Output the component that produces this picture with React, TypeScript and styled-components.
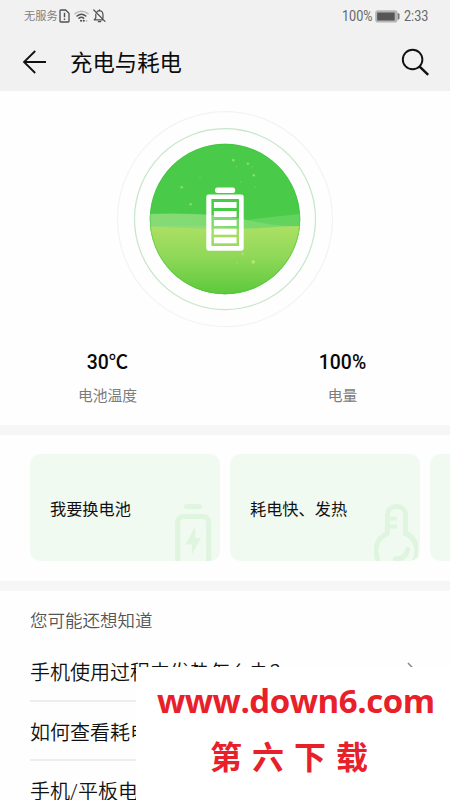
import React from "react";
import styled, { createGlobalStyle } from "styled-components";

const GlobalStyle = createGlobalStyle`
  * { box-sizing: border-box; }
  body {
    margin: 0;
    background: #fff;
    font-family: Roboto, "Noto Sans CJK SC", sans-serif;
    color: #111;
  }
  svg { display: block; flex: none; }
`;

const Screen = styled.main`
  position: relative;
  width: 450px;
  height: 800px;
  overflow: hidden;
  background: #fefefe;
`;

const Header = styled.header`
  height: 91px;
  background: #f1f1f1;
`;

const StatusBar = styled.div`
  display: flex;
  align-items: center;
  height: 32px;
  padding: 0 20px 0 24px;
  color: #666;
`;

const Carrier = styled.span`
  width: 35px;
  padding-top: 2px;
  font-size: 11.2px;
  line-height: 16px;
  color: #808080;
`;

const StatusText = styled.span<{ $width: number }>`
  width: ${(p) => p.$width}px;
  font-size: 14px;
  line-height: 16px;
  white-space: nowrap;
  transform: scaleX(0.9);
  transform-origin: left;
`;

const StatusIcons = styled.div`
  display: flex;
  align-items: center;
  gap: 4px;
  flex: 1;
`;

const StatusBattery = styled.div`
  margin-right: 4px;
`;

const TitleBar = styled.div`
  display: flex;
  align-items: center;
  height: 59px;
  padding: 0 20px 0 22px;
`;

const Title = styled.h1`
  flex: 1;
  margin: 2px 0 0 23px;
  font-size: 22.4px;
  line-height: 32px;
  font-weight: 400;
  color: #0c0c0c;
`;

const Hero = styled.section`
  display: flex;
  justify-content: center;
  height: 258px;
  padding-top: 17px;
`;

const Stats = styled.section`
  display: grid;
  grid-template-columns: 235px 235px;
  justify-content: center;
  height: 76px;
`;

const Stat = styled.div`
  text-align: center;
`;

const StatValue = styled.div`
  padding-top: 1px;
  font-size: 19.4px;
  line-height: 26px;
  font-weight: 500;
  color: #080808;
`;

const StatLabel = styled.div`
  margin-top: 9px;
  font-size: 14.8px;
  line-height: 22px;
  color: #7c7c7c;
`;

const Divider = styled.div`
  height: 10px;
  background: #f6f6f6;
`;

const Cards = styled.section`
  display: flex;
  gap: 10px;
  height: 146px;
  padding: 19px 0 20px 30px;
  overflow: hidden;
`;

const Card = styled.article`
  display: flex;
  flex: 0 0 190px;
  align-items: flex-end;
  justify-content: space-between;
  height: 107px;
  padding: 0 2px 0 20px;
  border-radius: 10px;
  background: #f1faf1;
  overflow: hidden;
`;

const CardText = styled.div`
  align-self: center;
  padding-top: 4px;
  font-size: 16.2px;
  line-height: 24px;
  white-space: nowrap;
`;

const Faq = styled.section`
  padding: 0 30px;
`;

const FaqHeading = styled.h2`
  margin: 0;
  padding-top: 17px;
  height: 51px;
  font-size: 17.5px;
  line-height: 26px;
  font-weight: 350;
  color: #555;
`;

const FaqRow = styled.div`
  display: flex;
  align-items: center;
  justify-content: space-between;
  height: 59.7px;
  padding-top: 4.4px;
  border-bottom: 2px solid #ededed;
  font-size: 20px;
  line-height: 30px;
  font-weight: 350;
  white-space: nowrap;
`;

const SiteBadge = styled.aside`
  position: absolute;
  left: 136px;
  top: 667px;
  width: 314px;
  height: 133px;
  padding-top: 10px;
  background: #fff;
  color: #e8202a;
  font-weight: 700;
  white-space: nowrap;
`;

const SiteUrl = styled.div`
  padding-left: 21px;
  font-family: "Open Sans", sans-serif;
  font-size: 33px;
  line-height: 48px;
  letter-spacing: -0.45px;
`;

const SiteName = styled.div`
  padding-left: 74px;
  font-family: "Noto Sans CJK SC", sans-serif;
  font-size: 32px;
  line-height: 44px;
  letter-spacing: 10px;
  margin-top: 8px;
`;

const SimIcon = () => (
  <svg width="11" height="14" viewBox="0 0 11 14" fill="none" stroke="#4f4f4f">
    <path d="M1 1.8Q1 1 1.8 1H6.6L10 4.3V12.2Q10 13 9.2 13H1.8Q1 13 1 12.2Z" strokeWidth="1.3" />
    <path d="M5.5 3.8V8.3M5.5 9.6V11" strokeWidth="1.4" />
  </svg>
);

const WifiIcon = () => (
  <svg width="15" height="14" viewBox="0 0 15 14" fill="none" strokeLinecap="round">
    <path d="M1 4.7Q7.5-.4 14 4.7" stroke="#bbb" strokeWidth="1.5" />
    <path d="M3 7Q7.4 3.4 11.8 7M5 9.2Q7.4 7.4 9.6 9.2" stroke="#505050" strokeWidth="1.5" />
    <path d="M7 11.8h.1M9.7 11.8h.1" stroke="#505050" strokeWidth="2" />
    <path d="M12.5 11.8h.1" stroke="#bbb" strokeWidth="1.8" />
  </svg>
);

const MutedBellIcon = () => (
  <svg width="13" height="14" viewBox="0 0 13 14" fill="none" stroke="#505050" strokeWidth="1.2" strokeLinecap="round" strokeLinejoin="round">
    <path d="M4.2 2.7Q5 1.7 6.5 1.7Q10 2 10 6V9M2.8 5V8.8L1.2 10.8H9.8M6.5.8V1.6M5.3 12.7H7.7M.8 1L12 12.3" />
  </svg>
);

const BatteryIcon = () => (
  <svg width="25" height="13" viewBox="0 0 25 13">
    <rect x=".2" y=".2" width="22.4" height="12.4" rx="2.8" fill="#b5b5b5" />
    <rect x="2.2" y="2.5" width="17.5" height="8" rx=".6" fill="#565656" />
    <path d="M22.7 3.2H23.4Q24.5 3.2 24.5 4.3V8.4Q24.5 9.5 23.4 9.5H22.7Z" fill="#777" />
  </svg>
);

const BackIcon = () => (
  <svg width="25" height="24" viewBox="0 0 25 24" fill="none" stroke="#111" strokeWidth="1.8">
    <path d="M13.2 1L2 12L13.2 23M2 12H24" />
  </svg>
);

const SearchIcon = () => (
  <svg width="30" height="30" viewBox="0 0 30 30" fill="none" stroke="#111">
    <circle cx="12.6" cy="12.5" r="9.8" strokeWidth="1.9" />
    <path d="M19.4 19.4L28.2 27.9" strokeWidth="2.5" />
  </svg>
);

const sparkles = [
  [123.3, 52.2, 1.4, 0.5], [137.9, 55.7, 1.3, 0.5], [126.4, 58.4, 0.8, 0.3],
  [142, 58.7, 0.8, 0.3], [143.8, 67.3, 1.3, 0.5], [130.3, 74, 0.8, 0.3],
  [90, 69.3, 0.8, 0.3], [71.7, 79.2, 1.3, 0.5], [80.6, 96.3, 1.3, 0.5],
  [145.1, 79.3, 0.8, 0.3], [132.6, 145.8, 1.2, 0.5], [143.2, 153.9, 1.8, 0.6],
  [127, 154.8, 0.9, 0.3],
];

const BatteryDial = () => (
  <svg width="220" height="222" viewBox="5 0 220 222">
    <defs>
      <clipPath id="dial"><circle cx="115" cy="111" r="75.2" /></clipPath>
      <linearGradient id="meadow" x1="0" y1="0" x2="0" y2="1">
        <stop offset="0" stopColor="#ace064" />
        <stop offset=".45" stopColor="#8ed858" />
        <stop offset="1" stopColor="#5ac83a" />
      </linearGradient>
      <linearGradient id="mist" x1="0" y1="0" x2="1" y2="0">
        <stop offset="0" stopColor="#86db77" />
        <stop offset="1" stopColor="#75d968" />
      </linearGradient>
    </defs>
    <circle cx="115" cy="111.1" r="107.5" fill="none" stroke="#f4f3f1" strokeWidth="1.2" />
    <circle cx="115" cy="111.1" r="90.5" fill="none" stroke="#c5e6c8" strokeWidth="1.2" />
    <g clipPath="url(#dial)">
      <path d="M39 35H191V188H39Z" fill="#49cb49" />
      <path d="M125 114Q155 109 191 106V124H100Z" fill="#62d35c" />
      <path d="M39 106Q99 104 137 112Q161 118 191 119V127H39Z" fill="url(#mist)" />
      <path d="M39 118Q77 117 115 118V127H39Z" fill="#97dd80" opacity=".55" />
      <path d="M39 118.5Q103 122 151 120Q172 118 191 118V188H39Z" fill="url(#meadow)" />
      {sparkles.map(([x, y, r, o]) => (
        <circle key={`${x}-${y}`} cx={x} cy={y} r={r} fill="#cff080" opacity={o} />
      ))}
    </g>
    <circle cx="115" cy="111" r="74.8" fill="none" stroke="#3fbd38" strokeWidth=".8" opacity=".5" />
    <rect x="105" y="79.5" width="20.2" height="5.4" rx="2.5" fill="#fff" />
    <path fillRule="evenodd" fill="#fff" d="M98.8 86.5H131.2Q133.7 86.5 133.7 88.8V140.4Q133.7 142.8 131.2 142.8H98.8Q96.3 142.8 96.3 140.4V88.8Q96.3 86.5 98.8 86.5ZM101.4 91V138H129V91Z" />
    {[94, 103, 112, 120.7, 129.3].map((y) => (
      <rect key={y} x="103.9" y={y} width="22.7" height="6" fill="#fff" />
    ))}
  </svg>
);

const ChargeArt = () => (
  <svg width="44" height="58" viewBox="0 0 44 58">
    <rect x="10" y="1" width="18" height="5" rx="2.5" fill="#dff5df" />
    <path d="M3.7 62V20Q3.7 13.5 10 13.5H28.3Q34.6 13.5 34.6 20V62" fill="none" stroke="#dff5df" strokeWidth="5.2" />
    <path d="M21.2 23.3L11.4 41.5H18L17.7 51.8L27 35H21.2Z" fill="#dff5df" />
  </svg>
);

const ThermometerArt = () => (
  <svg width="44" height="58" viewBox="0 0 44 58" fill="none" stroke="#dff5df" strokeWidth="5">
    <path d="M5.5 61C-.8 48.5 1.4 35.5 13.4 30.4V12C13.4 .7 31.6 .7 31.6 12V30.4C43.4 35.5 45.8 48.5 39.2 61" />
    <path d="M16 15.5H23M16 23.5H23" strokeWidth="3.8" />
    <path d="M33.6 46.5Q32.4 56 21.3 56" strokeLinecap="round" />
  </svg>
);

const Chevron = () => (
  <svg width="13" height="22" viewBox="0 0 13 22" fill="none" stroke="#888" strokeWidth="1.5">
    <path d="M1 1L9.5 10L1 19" />
  </svg>
);

const questions = ["手机使用过程中发热怎么办？", "如何查看耗电", "手机/平板电池"];

export default function App() {
  return (
    <Screen>
      <GlobalStyle />
      <Header>
        <StatusBar>
          <Carrier>无服务</Carrier>
          <StatusIcons><SimIcon /><WifiIcon /><MutedBellIcon /></StatusIcons>
          <StatusText $width={33}>100%</StatusText>
          <StatusBattery><BatteryIcon /></StatusBattery>
          <StatusText $width={26}>2:33</StatusText>
        </StatusBar>
        <TitleBar>
          <BackIcon />
          <Title>充电与耗电</Title>
          <SearchIcon />
        </TitleBar>
      </Header>
      <Hero><BatteryDial /></Hero>
      <Stats>
        <Stat><StatValue>30℃</StatValue><StatLabel>电池温度</StatLabel></Stat>
        <Stat><StatValue>100%</StatValue><StatLabel>电量</StatLabel></Stat>
      </Stats>
      <Divider />
      <Cards>
        <Card><CardText>我要换电池</CardText><ChargeArt /></Card>
        <Card><CardText>耗电快、发热</CardText><ThermometerArt /></Card>
        <Card />
      </Cards>
      <Divider />
      <Faq>
        <FaqHeading>您可能还想知道</FaqHeading>
        {questions.map((question) => (
          <FaqRow key={question}>{question}<Chevron /></FaqRow>
        ))}
      </Faq>
      <SiteBadge>
        <SiteUrl>www.down6.com</SiteUrl>
        <SiteName>第六下载</SiteName>
      </SiteBadge>
    </Screen>
  );
}
